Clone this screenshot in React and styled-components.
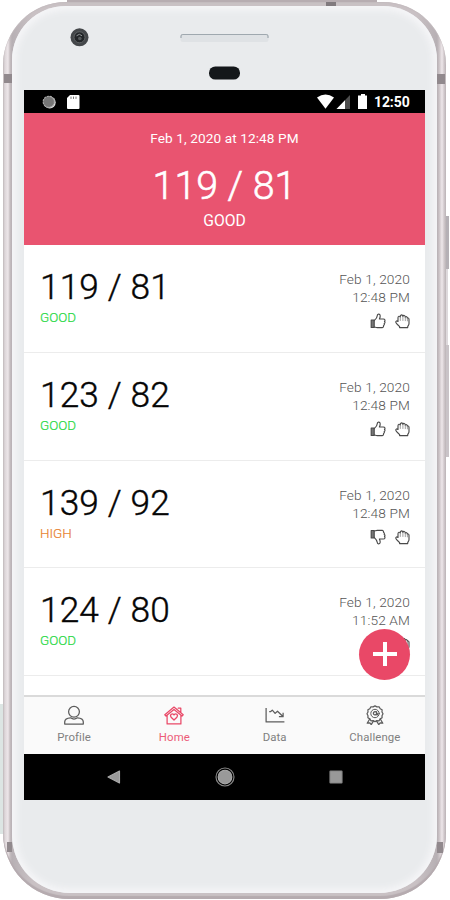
import React from "react";
import styled, { createGlobalStyle } from "styled-components";

const GlobalStyle = createGlobalStyle`
  * { box-sizing: border-box; }
  body { margin: 0; background: #fff; overflow: hidden; font-family: Roboto, "Liberation Sans", sans-serif; }
`;

const Stage = styled.div`
  position: relative;
  width: 450px;
  height: 900px;
  padding: 2px 4px 1px 3px;
  overflow: hidden;
`;

const SideKey = styled.div`
  position: absolute;
  left: ${(p) => p.$x}px;
  top: ${(p) => p.$y}px;
  width: ${(p) => p.$w}px;
  height: ${(p) => p.$h}px;
  background: ${(p) => p.$color};
`;

const Phone = styled.div`
  position: relative;
  height: 897px;
  padding: 4px 9px 6px;
  border-radius: 63px 63px 66px 66px;
  background: linear-gradient(90deg, #c4bcbf 0, #ded7da 2px, #ede6e9 5px, #c6bec1 7px, #b7b0b4 9px,
    #c9c1c4 30px, #c9c1c4 413px,
    #b7b0b4 434px, #c9c1c4 436px, #eee7ea 439px, #d1c9cc 441px, #bcb4b8 443px);
  box-shadow: inset 0 1px 1px #c4bcbf, inset 0 -3px 1px #b5abaf;
`;

const Body = styled.div`
  height: 887px;
  padding: 0 12px;
  border-radius: 54px 54px 58px 58px;
  background: #e9ebed;
  box-shadow: inset 0 0 7px 4px #f6f6f8;
`;

const Bezel = styled.svg`
  display: block;
  width: 401px;
  height: 84px;
`;

const Screen = styled.div`
  position: relative;
  height: 710px;
  display: flex;
  flex-direction: column;
  background: #fff;
`;

const StatusBar = styled.div`
  display: flex;
  align-items: center;
  height: 23px;
  flex: none;
  padding: 0 15px 0 17px;
  background: #000;
  color: #fff;
`;

const StatusGroup = styled.div`
  flex: 1;
  display: flex;
  align-items: center;
`;

const Clock = styled.span`
  width: 36px;
  margin-left: 6px;
  padding-top: 1px;
  font-size: 14px;
  font-weight: 700;
  line-height: 22px;
  letter-spacing: -0.1px;
`;

const Hero = styled.header`
  flex: none;
  height: 132px;
  padding-top: 17px;
  background: #e95470;
  color: #fff;
  text-align: center;
`;

const HeroDate = styled.div`
  font-size: 13.6px;
  line-height: 17px;
  letter-spacing: 0.1px;
`;

const HeroValue = styled.div`
  margin-top: 15px;
  font-size: 39.3px;
  line-height: 48px;
  font-weight: 300;
  -webkit-text-stroke: 0.6px currentColor;
`;

const HeroStatus = styled.div`
  margin-top: 2px;
  font-size: 15.7px;
  line-height: 18px;
`;

const List = styled.main`
  flex: none;
  height: 450px;
  overflow: hidden;
`;

const Row = styled.article`
  display: flex;
  justify-content: space-between;
  height: 107.75px;
  padding: 20px 15px 0 16px;
  border-bottom: 1px solid #ececec;
`;

const Value = styled.div`
  font-size: 35.2px;
  line-height: 45px;
  font-weight: 300;
  letter-spacing: 0.15px;
  color: #050505;
  -webkit-text-stroke: 0.4px currentColor;
`;

const Status = styled.div`
  margin-top: -1px;
  font-size: 13.4px;
  line-height: 17px;
  font-weight: 300;
  color: ${(p) => (p.$high ? "#e8812f" : "#27d843")};
  -webkit-text-stroke: 0.2px currentColor;
`;

const Meta = styled.div`
  padding-top: 5px;
  text-align: right;
  font-size: 13.7px;
  line-height: 18px;
  font-weight: 300;
  color: #555;
  letter-spacing: 0.12px;
`;

const Actions = styled.div`
  display: flex;
  justify-content: flex-end;
  gap: 8px;
  margin-top: 7px;
  color: #4a4a4a;
`;

const Icon = styled.svg`
  display: block;
  flex: none;
  width: ${(p) => p.$w}px;
  height: ${(p) => p.$h || p.$w}px;
  fill: none;
  stroke: currentColor;
  stroke-width: ${(p) => p.$stroke || 1.15};
  stroke-linecap: round;
  stroke-linejoin: round;
  transform: ${(p) => (p.$flip ? "scaleY(-1)" : "none")};
`;

const AddButton = styled.button`
  position: absolute;
  right: 15px;
  bottom: 120.5px;
  display: grid;
  place-items: center;
  width: 51px;
  height: 51px;
  padding: 0;
  border: 0;
  border-radius: 50%;
  background: #e94867;
  color: #fff;
`;

const TabBar = styled.nav`
  flex: none;
  display: grid;
  grid-template-columns: repeat(4, 1fr);
  height: 59px;
  border-top: 2px solid #dadada;
  background: #fafafa;
`;

const Tab = styled.div`
  display: flex;
  flex-direction: column;
  align-items: center;
  padding-top: 8px;
  color: ${(p) => (p.$active ? "#e94867" : "#5c5c5c")};
  font-size: 11.4px;
  line-height: 15px;
`;

const TabLabel = styled.span`
  margin-top: 5px;
  letter-spacing: 0.1px;
  color: ${(p) => (p.$active ? "#ec5c78" : "#808080")};
`;

const NavBar = styled.div`
  flex: none;
  display: flex;
  align-items: center;
  justify-content: space-between;
  height: 46px;
  padding: 0 81px 0 82px;
  background: #000;
`;

function Thumb({ down }) {
  return (
    <Icon $w={16} $flip={down} viewBox="0 0 16 16">
      <path d="M1.2 7h3v7.5h-3z" fill="#777" />
      <path d="M4.2 7.7C6 6 7.3 4.4 7.4 2.2c0-1.5 2.6-1.5 2.8.5.1 1.2-.3 2.2-.8 3.3h3.9c1.8 0 2.1 1.6 1.2 2.5.8.8.5 1.8-.3 2.1.4.8 0 1.7-.7 2.1.2.9-.3 1.9-1.4 1.9H7.2c-1.3 0-2-.5-3-.6" />
    </Icon>
  );
}

function Hand() {
  return (
    <Icon $w={16} $stroke={1.15} viewBox="0 0 16 16">
      <path d="M4 8.5V4.7c0-1.7 1.8-1.8 2.3-.7 0-2.7 2.4-2.7 2.6-.6.5-1.5 2.3-1.2 2.4.8.7-1 2.1-.5 2.1 1 .8-.6 1.6.1 1.6 1.2v4c0 1.7-1 2.2-1.3 3.2v1H5.6v-1C5 12.6 3 11.5 2 9.8c-.9-1.6.8-2.4 2-1.3z" />
      <path d="M6.3 4v3.5M8.9 3.4v4.1M11.3 4.2v3.5M13.4 5.4v2.5" stroke="#888" strokeWidth=".8" />
    </Icon>
  );
}

function TabIcon({ name }) {
  return (
    <Icon $w={20} $stroke={1.25} viewBox="0 0 20 20">
      {name === "Profile" && (
        <>
          <circle cx="10" cy="6.8" r="5.4" />
          <path d="M6.6 12.8C3 13 .8 14.7.7 16.9v2.1h18.6v-2.1c-.1-2.2-2.3-3.9-5.9-4.1-1.9 1.4-4.9 1.4-6.8 0z" />
        </>
      )}
      {name === "Home" && (
        <>
          <path d="m.8 9.8 9.2-7.7 9.2 7.7-1.2 1.2L10 4.4 2 11zM3.1 10.2v8.7h13.8v-8.7M14.2 3.2h2.6v4.4" />
          <path d="M10 15 7.1 12.2c-1.7-2.5 1.3-4.4 2.9-2.2 1.6-2.2 4.6-.3 2.9 2.2z" />
        </>
      )}
      {name === "Data" && (
        <path d="M1.1 3v13.9h18.3M4.2 6.7h1.3l1.8-1.6 2.8 3.3 2.4-2.2 5.2 5.1M13.9 11.7h4.2V7.8" strokeLinecap="butt" />
      )}
      {name === "Challenge" && (
        <>
          <path d="m10 .9 1.9 1 2.2-.1 1.1 1.9 1.9 1.1-.1 2.2 1 1.8-1 1.9.1 2.1-1.9 1.1-1.1 1.9-2.2-.1-1.9 1-1.9-1-2.2.1-1.1-1.9-1.9-1.1.1-2.1-1-1.9 1-1.8-.1-2.2 1.9-1.1 1.1-1.9 2.2.1z" />
          <circle cx="10" cy="8.5" r="4.2" strokeWidth="1" />
          <path d="M11.6 6.7v3.1c.9.4 1.2-.5 1.2-1.3M11.6 8.4a1.6 1.6 0 1 1-.2-.9M4.7 14l-2.5 4.2 2.7-.3 1.3 1.7 2.5-4M15.3 14l2.5 4.2-2.7-.3-1.3 1.7-2.5-4" />
        </>
      )}
    </Icon>
  );
}

const readings = [
  { value: "119 / 81", status: "GOOD", time: "12:48 PM" },
  { value: "123 / 82", status: "GOOD", time: "12:48 PM" },
  { value: "139 / 92", status: "HIGH", time: "12:48 PM" },
  { value: "124 / 80", status: "GOOD", time: "11:52 AM" },
];

function Reading({ value, status, time }) {
  const high = status === "HIGH";
  return (
    <Row>
      <div>
        <Value>{value}</Value>
        <Status $high={high}>{status}</Status>
      </div>
      <Meta>
        <div>Feb 1, 2020</div>
        <div>{time}</div>
        <Actions>
          <Thumb down={high} />
          <Hand />
        </Actions>
      </Meta>
    </Row>
  );
}

export default function App() {
  return (
    <Stage>
      <GlobalStyle />
      <SideKey $x={67} $y={0} $w={310} $h={3} $color="#b7adb1" />
      <SideKey $x={0} $y={704} $w={3} $h={130} $color="#dce5e3" />
      <SideKey $x={446} $y={216} $w={3} $h={53} $color="#b5b0b5" />
      <SideKey $x={446} $y={269} $w={2} $h={76} $color="#ded9dc" />
      <SideKey $x={446} $y={345} $w={3} $h={112} $color="#c9c3c7" />
      <Phone>
        <SideKey $x={1} $y={72} $w={8} $h={9} $color="#91898d" />
        <SideKey $x={434} $y={72} $w={8} $h={10} $color="#91898d" />
        <SideKey $x={323} $y={0} $w={10} $h={4} $color="#817a7e" />
        <SideKey $x={4} $y={840} $w={5} $h={10} $color="#91898d" />
        <SideKey $x={434} $y={840} $w={6} $h={11} $color="#91898d" />
        <Body>
          <Bezel viewBox="24 6 401 84">
            <circle cx="79.5" cy="37.3" r="9" fill="#44474a" />
            <circle cx="79.5" cy="37.3" r="5.5" fill="#232629" stroke="#6b6e70" strokeWidth=".8" />
            <path d="M76.5 35.8q3-3 5.5 0" stroke="#929698" fill="none" />
            <circle cx="79.8" cy="38.5" r="1.8" fill="#55595b" />
            <rect x="180.5" y="34" width="88" height="8" rx="2.5" fill="#dfe2e5" />
            <path d="M181 38v-2q0-1.5 2-1.5h83q2 0 2 1.5v2" fill="none" stroke="#9fa8af" strokeWidth="1.2" />
            <rect x="209" y="66.5" width="31" height="13" rx="6.3" fill="#14171a" />
          </Bezel>
          <Screen>
            <StatusBar>
              <StatusGroup>
                <Icon $w={16} viewBox="0 0 16 16">
                  <circle cx="8.7" cy="8.4" r="6" fill="#ddd" stroke="none" />
                  <circle cx="7.8" cy="7.8" r="5.6" fill="#777" stroke="#aaa" strokeDasharray="1.5 1.5" />
                </Icon>
                <Icon $w={30} $h={16} viewBox="0 0 30 16">
                  <path d="M13 1h8.5q1 0 1 1v12q0 1-1 1H11q-1 0-1-1V4z" fill="#fff" stroke="none" />
                  <path d="M14 3v1.5M16.5 3v1.5M19 3v1.5" stroke="#777" strokeWidth="1" />
                </Icon>
              </StatusGroup>
              <Icon $w={52} $h={18} viewBox="0 0 52 18">
                <path d="M1 4.5q8.5-6 17 0L9.5 15.8z" fill="#fff" stroke="none" />
                <path d="M20.5 16 34 2v14z" fill="#4d4d4d" stroke="none" />
                <path d="M20.5 16 29 7.3V16z" fill="#fff" stroke="none" />
                <path d="M45 1h4v1.5h2V16h-9V2.5h3z" fill="#fff" stroke="none" />
              </Icon>
              <Clock>12:50</Clock>
            </StatusBar>
            <Hero>
              <HeroDate>Feb 1, 2020 at 12:48 PM</HeroDate>
              <HeroValue>119 / 81</HeroValue>
              <HeroStatus>GOOD</HeroStatus>
            </Hero>
            <List>
              {readings.map((r) => (
                <Reading key={r.value} {...r} />
              ))}
            </List>
            <TabBar>
              {["Profile", "Home", "Data", "Challenge"].map((name) => (
                <Tab key={name} $active={name === "Home"}>
                  <TabIcon name={name} />
                  <TabLabel $active={name === "Home"}>{name}</TabLabel>
                </Tab>
              ))}
            </TabBar>
            <NavBar>
              <Icon $w={16} viewBox="0 0 16 16">
                <path d="M2 8 13.5 2v12z" fill="#999" stroke="#aaa" />
              </Icon>
              <Icon $w={20} viewBox="0 0 20 20">
                <circle cx="10" cy="10" r="9" stroke="#888" />
                <circle cx="10" cy="10" r="6.8" fill="#999" stroke="#aaa" />
              </Icon>
              <Icon $w={16} viewBox="0 0 16 16">
                <rect x="2" y="2" width="12" height="12" rx=".5" fill="#999" stroke="#888" />
              </Icon>
            </NavBar>
            <AddButton aria-label="Add reading">
              <Icon $w={26} $stroke={4} viewBox="0 0 26 26">
                <path d="M13 1v24M1 13h24" strokeLinecap="butt" />
              </Icon>
            </AddButton>
          </Screen>
        </Body>
      </Phone>
    </Stage>
  );
}
